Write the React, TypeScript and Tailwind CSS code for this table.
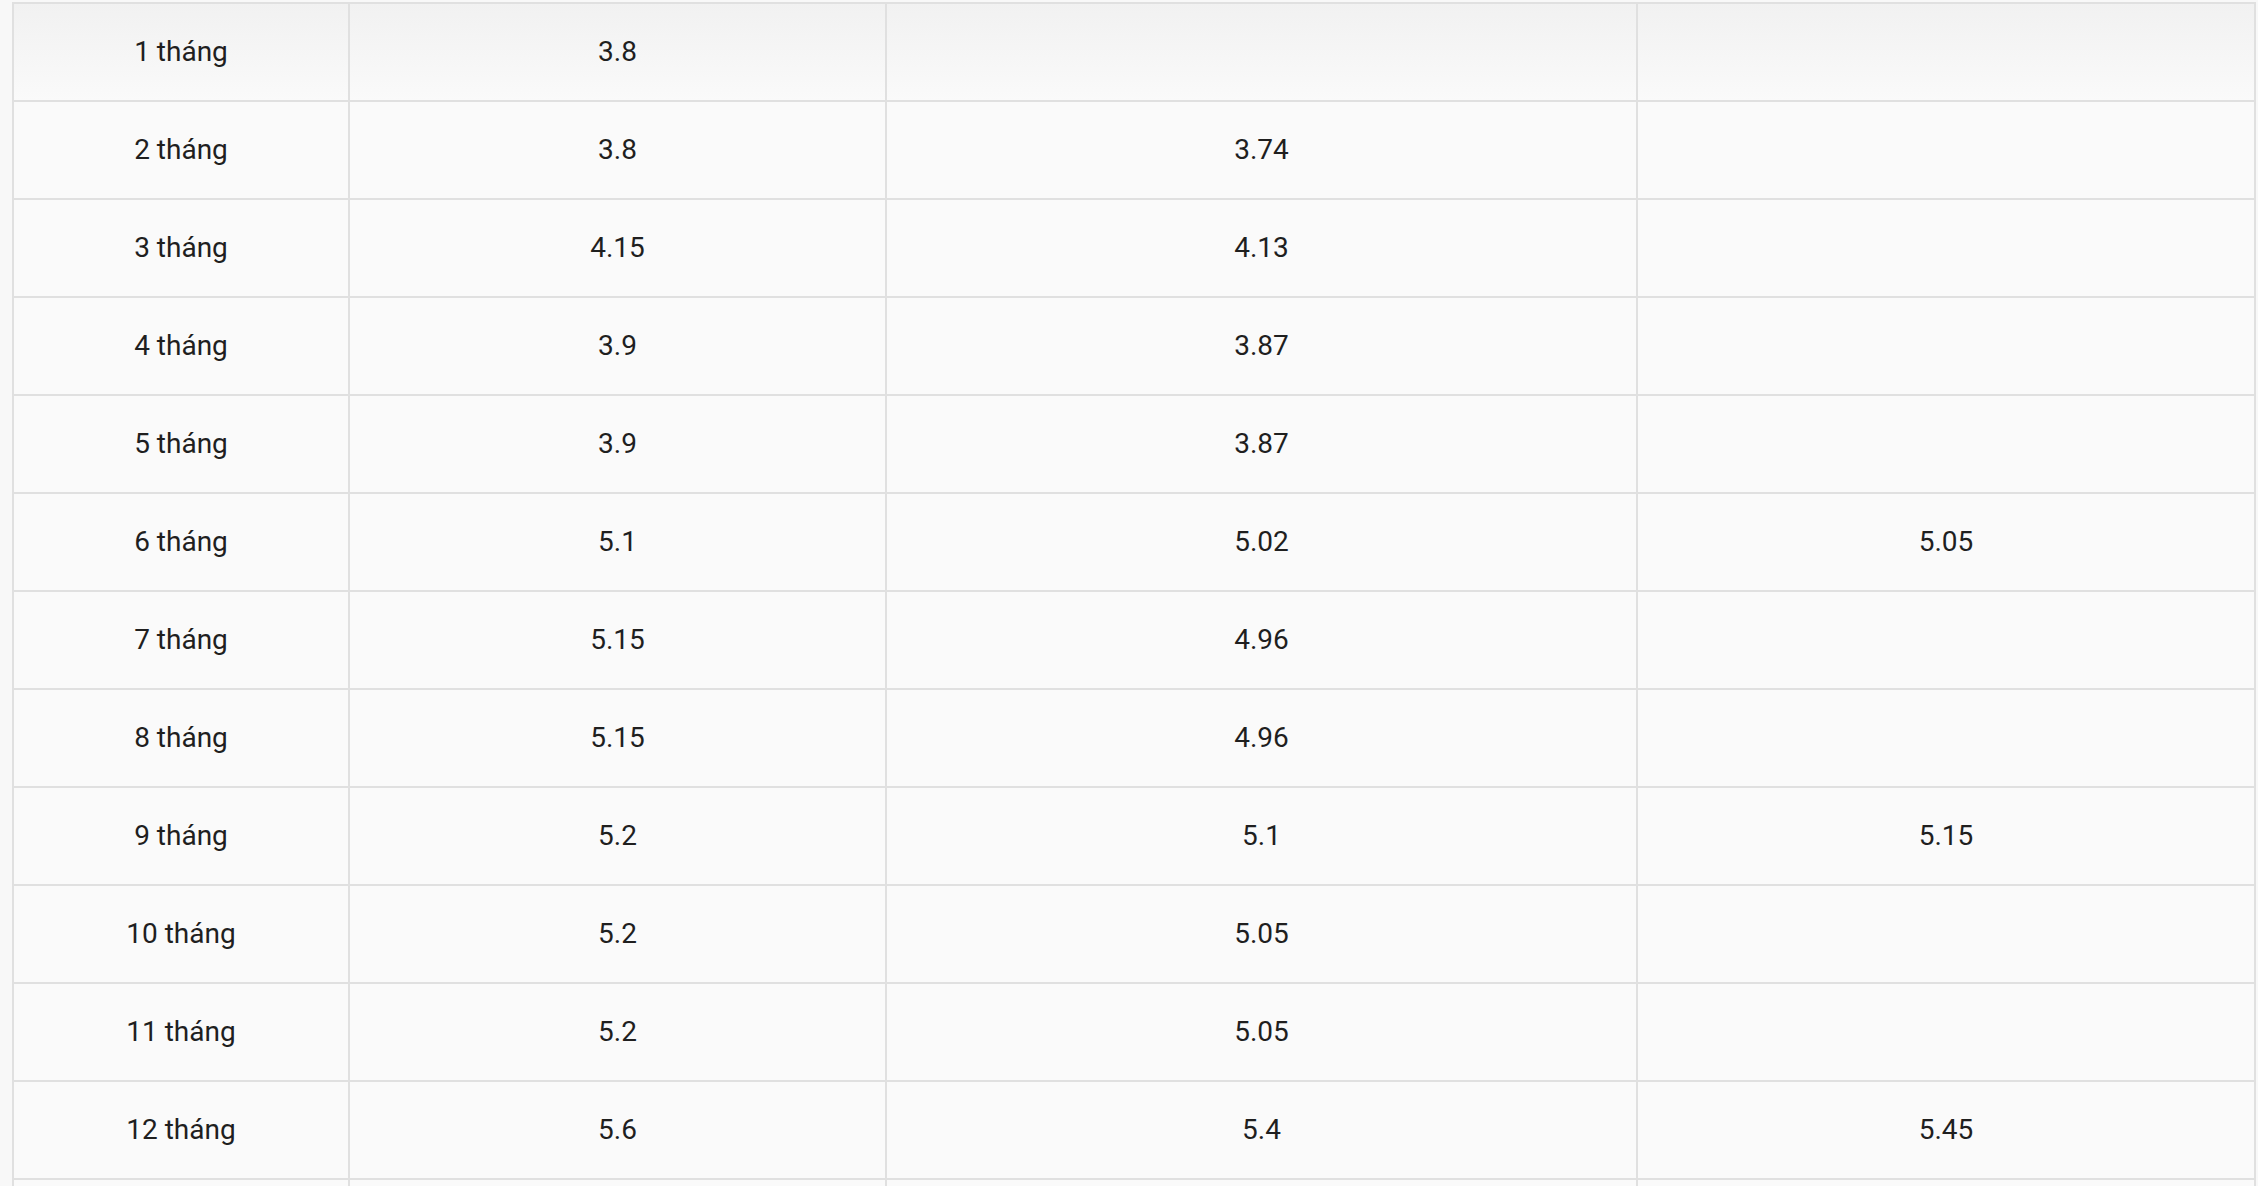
const rows: [string, string, string, string][] = [
  ["1 tháng", "3.8", "", ""],
  ["2 tháng", "3.8", "3.74", ""],
  ["3 tháng", "4.15", "4.13", ""],
  ["4 tháng", "3.9", "3.87", ""],
  ["5 tháng", "3.9", "3.87", ""],
  ["6 tháng", "5.1", "5.02", "5.05"],
  ["7 tháng", "5.15", "4.96", ""],
  ["8 tháng", "5.15", "4.96", ""],
  ["9 tháng", "5.2", "5.1", "5.15"],
  ["10 tháng", "5.2", "5.05", ""],
  ["11 tháng", "5.2", "5.05", ""],
  ["12 tháng", "5.6", "5.4", "5.45"],
  ["", "", "", ""],
];

const App = () => {
  return (
    <div className="min-h-screen bg-[#f8f8f8] pl-[12px] pt-[2px] overflow-hidden">
      <div
        className="grid grid-cols-[336px_537px_751px_618px] w-max border-l-2 border-t-2 border-[#e0e0e0] text-[28px] text-[#1f1f1f]"
        style={{ fontFamily: "Roboto, 'Liberation Sans', sans-serif" }}
      >
        {rows.map((row, i) =>
          row.map((cell, j) => (
            <div
              key={`${i}-${j}`}
              className={`h-[98px] flex items-center justify-center border-r-2 border-b-2 border-[#e0e0e0] ${
                i === 0 ? "bg-linear-to-b from-[#f1f1f1] to-[#fafafa]" : "bg-[#fafafa]"
              }`}
            >
              {cell}
            </div>
          ))
        )}
      </div>
    </div>
  );
};

export default App;
